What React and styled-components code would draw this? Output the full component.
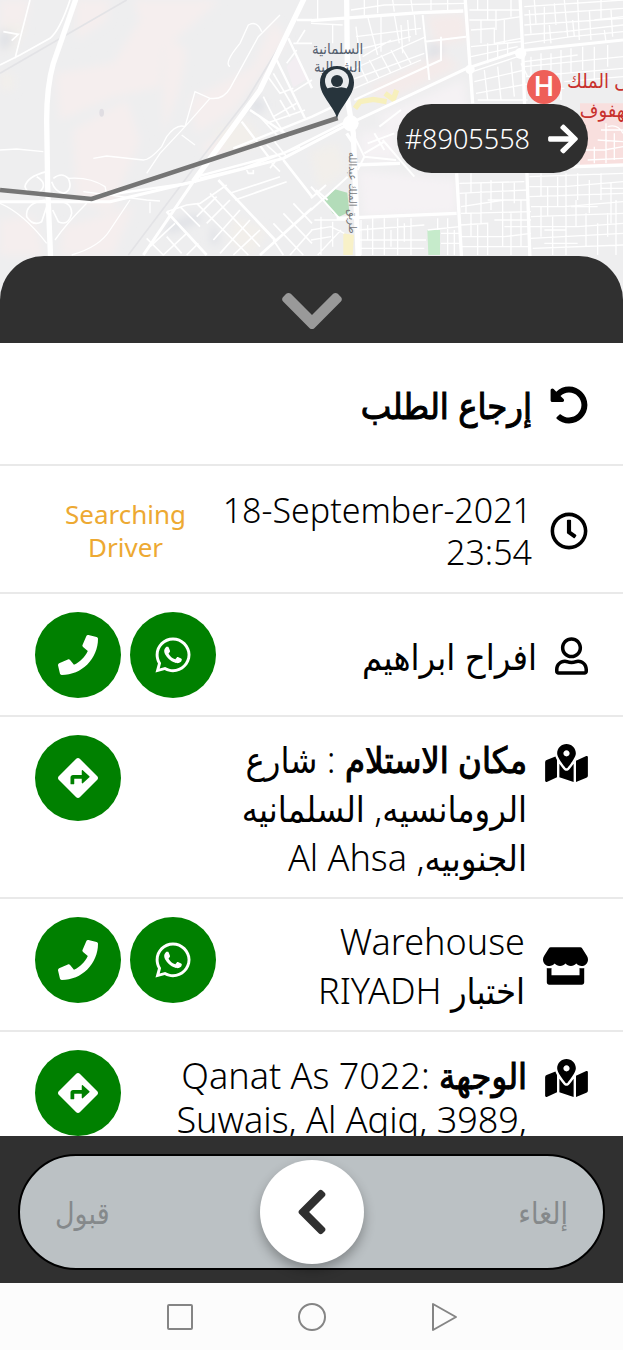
import React from "react";
import styled, { createGlobalStyle } from "styled-components";
import {
  FaArrowRight,
  FaChevronDown,
  FaChevronLeft,
  FaDirections,
  FaMapMarkedAlt,
  FaPhone,
  FaRegClock,
  FaRegUser,
  FaStore,
  FaUndoAlt,
  FaWhatsapp
} from "react-icons/fa";

const LocalStreets = () => (
  <g fill="none" stroke="#fff" strokeWidth="5">
    {/* west side tracks */}
    <path d="M90 0L45 175M210 0Q180 90 150 115L60 165L0 195M10 95L55 103L35 122" />
    <path strokeWidth="4" d="M840 45L775 110L690 265Q670 300 630 295L555 380L480 460L440 520M630 295L585 275L555 380M690 200Q670 190 720 130L745 75Q770 60 785 95M555 380Q530 370 500 410L485 440Q450 480 430 480L320 468L280 475M545 405L585 435M0 450L50 447L130 455" />
    <path strokeWidth="4" d="M205 535Q270 530 315 560L320 580M250 575L440 600L480 603M450 605V640M390 600L330 690Q300 740 215 765M0 610Q70 640 140 730M165 720Q200 670 260 610" />
    <path d="M140 515Q80 530 75 560Q85 590 120 575Q145 550 110 530M160 535Q185 515 205 535Q220 570 190 580Q165 575 155 545M135 600Q75 610 80 650Q100 680 125 665L140 620M160 605Q215 600 215 640Q205 680 175 665L158 630" />
    {/* blocks north of the route */}
    <path strokeWidth="7" d="M830 180L915 355M750 330L870 410M725 365L805 470M890 60H936M865 115L936 265" />
    <path d="M880 130H936M890 150L860 190M915 90L890 130M800 225L840 280L880 265M820 220L885 330M790 290L820 350L890 310M820 350L850 395M800 370L915 330M840 300L870 350M880 275L936 240M775 345L835 410M800 435L850 480M820 420L860 470" />
    {/* blocks south of the route */}
    <path strokeWidth="8" d="M655 540L825 720M500 635L620 765M850 480L936 590M936 625L780 765" />
    <path d="M500 635L560 615L600 610L680 555M690 580L840 530M705 600L860 545M590 610L745 765M630 580L780 740M540 620L600 680M690 600L620 670M720 630L640 720M750 660L660 760M780 690L700 765M650 590L590 650M525 670L450 740M560 700L490 765M440 715L490 765M500 710L545 760M595 730L560 765M850 640L936 730M820 670L910 765M880 610L936 670M870 765L936 690M820 720L850 765M740 510L745 520H760V510M815 490L840 515M825 485L810 505" />
  </g>
);

const CityBlocks = () => (
  <g fill="none" stroke="#fff" strokeWidth="4">
    {/* north west quarter */}
    <path d="M0 70L95 75M65 75V130M20 0V60M135 80L150 200M170 50L200 165M135 110L330 85M210 50V155M250 45L265 130M310 45L315 105M135 150L300 110M120 210L345 110M120 240L340 160M155 170L240 120M160 0V45M200 0V40M245 0L250 35M300 0L305 35M360 0V30M410 0V30M120 30L220 15L460 10M270 75L275 160M290 60L295 125" />
    <path strokeWidth="6" d="M335 45L355 240M390 110V180L130 300M465 110L340 125" />
    <path d="M145 195L170 245M175 180L205 235M210 165L240 220M240 150L270 205M270 140L300 190M130 265L330 180" />
    {/* north centre */}
    <path d="M475 30H630M475 60H560L630 50M480 90L550 85V130L630 115M480 140L630 125M480 170L620 140M500 0V30M530 0V60M555 30V90M580 60V130M600 0V50M510 60V130M530 130V190M560 135V175M590 130V165M485 215L620 170M490 245L640 210M495 280L660 250M520 210L530 300M560 200L570 300M600 185L610 290M500 300H650M630 190L650 230" />
    {/* north east */}
    <path d="M640 20L936 0M640 45L936 25M640 75L936 55M640 105L760 95L936 75M640 130L780 110L936 95M670 0L675 70M700 20V130M730 10L735 75M760 0L770 110M800 0L805 120M835 30L840 120M870 0V55M900 30L905 110M655 30L660 100M715 75L720 130M785 60L790 110M850 60L936 50M880 90L885 125M640 200L936 170M645 230L936 205M650 265H760M660 170V290M690 160V230M720 160V210M750 150V300M780 145V220M815 140V210M850 140V240M890 135V200M760 245L936 230M640 185L800 165" />
    {/* quarter behind the order pill */}
    <path strokeWidth="6" d="M130 410L160 470L140 510M160 470L255 480M215 420L310 530M205 380L270 330M160 460L220 425M170 430L250 400M130 495L255 490M190 400L220 450" />
    {/* south centre */}
    <path d="M445 550L640 545M445 580L540 575L650 570M450 620L580 600L655 600M450 640L660 635M450 675L530 670V765M450 710H580L660 700M450 740H660M480 520V580M510 550V670M540 540V630M575 545V740M610 545V610M630 600V740M480 640V710M500 675V765M550 660H660M600 640V765M465 580V640M530 600H610M580 680H660" />
    {/* south east */}
    <path d="M655 530L936 520M655 560H760L936 545M655 590L936 580M660 620H760L936 605M660 650L936 640M660 680H800L936 670M660 715L936 700M665 745L936 735M690 520V590M710 560V650M740 530V620M765 520V765M800 520V600M835 540V640M870 520V600M900 550V670M690 620V710M725 650V765M795 600V680M825 640V740M860 670V765M890 640V710M915 600V765M700 690H765M780 620H860M870 565H936M700 730H800" />
    {/* hospital campus */}
    <path d="M870 390H936M860 420L936 425M820 450H880L936 440M830 480L936 475M885 370V490M910 400V480M850 440V490M890 380Q920 370 936 400" />
    {/* south west */}
    <path d="M10 660L110 660M0 690L60 680L100 700M30 650V765M65 665V740M0 720L60 710M20 765L90 690M150 660V765M185 655V765M220 655V765M260 655V765M300 655V765M140 690L340 675M140 720H345M150 745H340M170 675V720M240 690V740M280 670V725M380 655V690M410 655V765M350 690L445 680M390 700H445M390 730H445M430 690V765" />
    <path strokeWidth="6" d="M0 560L85 655M0 630L110 530M50 600L15 570M0 595L45 555" />
  </g>
);

const MapArt = () => (
  <MapSvg viewBox="0 0 1869 1020" preserveAspectRatio="xMidYMin slice" aria-hidden="true">
    <defs>
      <filter id="soft" x="-20%" y="-20%" width="140%" height="140%">
        <feGaussianBlur stdDeviation="12" />
      </filter>
    </defs>
    <rect width="1869" height="1020" fill="#eeeeef" />
    <g filter="url(#soft)">
      <path fill="#f5eeee" d="M400 0L660 0L580 70L510 130L440 110ZM230 0H330L320 60L230 120ZM170 220L340 190L420 60L490 90L480 260L340 290L180 360ZM220 390L380 300L420 420L330 640L230 600ZM490 100L560 150L540 260L490 400ZM0 0H90L60 120L0 160ZM570 300L760 200L820 60L860 120L700 330L590 400ZM0 660L100 650L130 765H0ZM190 680L400 620L340 765H180ZM600 440L700 380L760 430L640 470Z" />
      <path fill="#f2efeb" d="M20 60L80 80L40 150L0 150ZM640 390L740 360L790 430L680 460ZM0 220H40V270H0ZM930 460L1010 430L1040 510L960 570ZM700 650L800 690L760 765L690 730Z" />
      <path fill="#dfe1e6" d="M0 90L40 100L30 140L0 150ZM755 290L800 310L780 340L750 330ZM490 680L590 640L610 660L510 700ZM640 660L660 730L630 730ZM1290 130L1340 110L1320 180L1280 180Z" />
      <path fill="#f5f2f4" d="M1075 510L1370 540L1370 640L1090 650ZM1080 400L1190 380V480H1080ZM1130 350L1390 240L1400 320L1180 390Z" />
      <path fill="#f4ebea" d="M1280 50L1390 40L1400 120L1310 140ZM1110 260L1330 160L1380 200L1140 310Z" />
    </g>
    <ellipse cx="305" cy="338" rx="7" ry="12" fill="#e0dde2" />
    <path fill="#f3eef2" d="M860 200L890 165L925 235L880 262Z" />
    <path fill="#f8dfde" d="M1740 310H1869V500H1740Z" />
    <path fill="#b3dcb9" d="M973 600L1005 568L1042 578L1048 635L1018 650L998 640Z" />
    <path fill="#c6ebcb" d="M1282 690H1320V765H1285Z" />
    <path fill="#f8f1c8" d="M1030 700L1062 705L1058 765H1030Z" />
    <path fill="none" stroke="#f7f0bd" strokeWidth="16" d="M1065 325L1080 305L1120 298L1160 305M1155 280L1180 298L1190 270" />
    <LocalStreets />
    <g transform="translate(933 0)">
      <CityBlocks />
    </g>
    <path fill="none" stroke="#e3e3e6" strokeWidth="5" d="M0 220L380 0M880 70L740 300L600 480L385 765" />
    <g fill="none" stroke="#fff" strokeLinejoin="round">
      <path strokeWidth="16" d="M230 -10L160 190Q140 260 140 360L143 560L152 780" />
      <path strokeWidth="16" d="M915 -10L780 270L580 545" />
      <path strokeWidth="9" d="M580 545L430 765M0 605H330L580 545L850 475L1040 375L1400 205L1560 152L1869 120" />
      <path strokeWidth="7" d="M320 585L560 550M590 530L850 460L1040 365M600 535L730 505L900 440M700 445L936 350L1020 310" />
      <path strokeWidth="16" d="M1040 -10L1043 300L1060 400L1075 780" />
      <path strokeWidth="10" d="M933 62L1260 38L1390 33M1395 -10L1410 200L1418 310M1560 -10L1568 150L1590 780M1370 520L1385 780M1010 655L1370 640M1570 505L1869 495M1060 495L1200 490M1060 430L1040 400" />
    </g>
    <g fill="#fff">
      <circle cx="1562" cy="160" r="17" />
      <circle cx="1410" cy="208" r="14" />
      <circle cx="1052" cy="370" r="24" />
    </g>
    <path fill="none" stroke="#757575" strokeWidth="14" d="M0 570L275 597L1013 354" />
  </MapSvg>
);

const PersonPin = () => (
  <svg viewBox="0 0 34 52" width="34" height="52" aria-hidden="true">
    <path
      fill="#27343c"
      d="M17 0C7 0 0 7 0 16.500C0 24 3.500 29 8 36C12 42 15 46 17 52C19 46 22 42 26 36C30.500 29 34 24 34 16.500C34 7 27 0 17 0Z"
    />
    <circle cx="17" cy="15" r="12" fill="#e9ebed" />
    <circle cx="17" cy="15" r="6" fill="#27343c" />
    <path fill="#27343c" d="M5 24Q10 20 17 22Q24 20 29 24L24 31H10Z" />
  </svg>
);

const ContactActions = () => (
  <Actions>
    <RoundButton type="button" aria-label="WhatsApp">
      <FaWhatsapp />
    </RoundButton>
    <RoundButton type="button" aria-label="Phone">
      <FaPhone />
    </RoundButton>
  </Actions>
);

const DirectionsAction = () => (
  <Actions>
    <RoundButton type="button" aria-label="Directions">
      <FaDirections />
    </RoundButton>
  </Actions>
);

const App = () => {
  return (
    <>
      <GlobalStyle />
      <Screen dir="rtl" lang="ar">
        <MapArea>
          <MapArt />
          <DistrictLabel>
            السلمانية
            <br />
            الشمالية
          </DistrictLabel>
          <StreetLabel>طريق الملك عبدالله</StreetLabel>
          <HospitalMark>H</HospitalMark>
          <HospitalLabel>
            مستشفى الملك
            <br />
            فهد بالهفوف
          </HospitalLabel>
          <PinSpot>
            <PersonPin />
          </PinSpot>
          <OrderPill type="button">
            <FaArrowRight />
            <span dir="ltr">#8905558</span>
          </OrderPill>
        </MapArea>

        <SheetHandle type="button" aria-label="إغلاق">
          <FaChevronDown />
        </SheetHandle>

        <Details>
          <Row $icon={38}>
            <FaUndoAlt />
            <RowText>
              <strong>إرجاع الطلب</strong>
            </RowText>
          </Row>
          <Row $icon={38} $tall>
            <FaRegClock />
            <DateText dir="ltr">
              18-September-2021
              <br />
              23:54
            </DateText>
            <Status dir="ltr">
              Searching
              <br />
              Driver
            </Status>
          </Row>
          <Row $icon={33}>
            <FaRegUser />
            <RowText>افراح ابراهيم</RowText>
            <ContactActions />
          </Row>
          <Row $icon={43} $top>
            <FaMapMarkedAlt />
            <RowText>
              <strong>مكان الاستلام</strong> : شارع
              <br />
              الرومانسيه, السلمانيه
              <br />
              الجنوبيه, Al Ahsa
            </RowText>
            <DirectionsAction />
          </Row>
          <Row $icon={45}>
            <FaStore />
            <RowText>
              Warehouse
              <br />
              اختبار RIYADH
            </RowText>
            <ContactActions />
          </Row>
          <Row $icon={43} $top>
            <FaMapMarkedAlt />
            <RowText $latin>
              <strong>الوجهة</strong> :7022 Qanat As
              <br />
              <bdi dir="ltr">Suwais, Al Aqiq, 3989,</bdi>
            </RowText>
            <DirectionsAction />
          </Row>
        </Details>

        <Footer>
          <Slide dir="ltr">
            <SlideLabels dir="rtl">
              <span>إلغاء</span>
              <span>قبول</span>
            </SlideLabels>
            <SlideInput type="range" min="0" max="100" defaultValue="50" aria-label="قبول / إلغاء" />
            <FaChevronLeft />
          </Slide>
        </Footer>

        <SystemNav dir="ltr">
          <NavButton type="button" aria-label="Recent">
            <svg viewBox="0 0 30 30">
              <rect x="3" y="3" width="24" height="24" rx="1" />
            </svg>
          </NavButton>
          <NavButton type="button" aria-label="Home">
            <svg viewBox="0 0 30 30">
              <circle cx="15" cy="15" r="13" />
            </svg>
          </NavButton>
          <NavButton type="button" aria-label="Back">
            <svg viewBox="0 0 30 30">
              <path d="M4 2V28L27 15Z" />
            </svg>
          </NavButton>
        </SystemNav>
      </Screen>
    </>
  );
};

const GlobalStyle = createGlobalStyle`
  * {
    box-sizing: border-box;
  }
  body {
    margin: 0;
    font-family: "Noto Sans", "Open Sans", "DejaVu Sans Condensed", "DejaVu Sans", sans-serif;
    color: #000;
  }
  button {
    border: 0;
    padding: 0;
    font: inherit;
    cursor: pointer;
  }
`;

const Screen = styled.main`
  height: 100vh;
  display: flex;
  flex-direction: column;
  overflow: hidden;
  background: #fff;
`;

const MapArea = styled.section`
  position: relative;
  flex: 0 0 300px;
  overflow: hidden;
  background: #eeeeef;
`;

const MapSvg = styled.svg`
  display: block;
  width: 100%;
  height: 340px;
`;

const DistrictLabel = styled.span`
  position: absolute;
  top: 39px;
  left: 312px;
  font-size: 15px;
  line-height: 18px;
  color: #566170;
  text-align: center;
`;

const StreetLabel = styled.span`
  position: absolute;
  top: 152px;
  left: 346px;
  writing-mode: vertical-rl;
  font-size: 11px;
  line-height: 14px;
  color: #77797c;
  white-space: nowrap;
`;

const HospitalMark = styled.span`
  position: absolute;
  top: 70px;
  left: 527px;
  width: 34px;
  height: 34px;
  border-radius: 50%;
  background: #ee5f58;
  color: #fff;
  font-family: Roboto, sans-serif;
  font-size: 28px;
  font-weight: 500;
  line-height: 34px;
  text-align: center;
`;

const HospitalLabel = styled.span`
  position: absolute;
  top: 66px;
  left: 567px;
  font-size: 20px;
  line-height: 29px;
  color: #c8312d;
  text-align: center;
  white-space: nowrap;
`;

const PinSpot = styled.span`
  position: absolute;
  top: 66px;
  left: 320px;
  line-height: 0;
`;

const OrderPill = styled.button`
  position: absolute;
  top: 104px;
  right: 35px;
  height: 69px;
  padding: 0 8px;
  display: flex;
  align-items: center;
  gap: 16px;
  border-radius: 35px;
  background: #2f2f2f;
  color: #fff;
  font-size: 27px;
  font-weight: 300;
  svg {
    font-size: 34px;
  }
`;

const SheetHandle = styled.button`
  position: relative;
  flex: 0 0 87px;
  min-height: 0;
  margin-top: -44px;
  padding-top: 22px;
  display: flex;
  justify-content: center;
  align-items: center;
  border-radius: 44px 44px 0 0;
  background: #303030;
  color: #999;
  svg {
    width: 62px;
    height: 70px;
  }
`;

const Details = styled.section`
  flex: 1 1 0;
  min-height: 0;
  overflow: hidden;
`;

const Row = styled.div`
  display: flex;
  align-items: ${props => (props.$top ? "flex-start" : "center")};
  gap: 18px;
  min-height: ${props => (props.$tall ? "128px" : "123px")};
  padding: 18px 35px 15px;
  border-bottom: 2px solid #e9e9e9;
  > svg {
    flex: none;
    width: ${props => props.$icon}px;
    height: 38px;
    margin-top: ${props => (props.$top ? "9px" : "0")};
  }
`;

const RowText = styled.p`
  flex: 1;
  margin: 0;
  padding-top: ${props => (props.$latin ? "4px" : "0")};
  font-size: 36px;
  font-weight: 300;
  line-height: ${props => (props.$latin ? "44px" : "49px")};
  white-space: nowrap;
  strong {
    font-weight: 400;
    -webkit-text-stroke: 1px #000;
  }
`;

const DateText = styled.p`
  flex: 1;
  margin: 0;
  font-size: 34px;
  font-weight: 300;
  line-height: 42px;
  text-align: right;
  white-space: nowrap;
`;

const Status = styled.p`
  margin: 0;
  padding-left: 30px;
  padding-right: 12px;
  font-size: 26px;
  line-height: 33px;
  color: #eda932;
  text-align: center;
`;

const Actions = styled.div`
  display: flex;
  align-self: flex-start;
  gap: 9px;
`;

const RoundButton = styled.button`
  width: 86px;
  height: 86px;
  display: flex;
  justify-content: center;
  align-items: center;
  border-radius: 50%;
  background: #008000;
  color: #fff;
  font-size: 40px;
`;

const Footer = styled.footer`
  flex: 0 0 147px;
  padding: 18px 18px 13px;
  background: #303030;
`;

const Slide = styled.div`
  display: grid;
  height: 116px;
  border: 2px solid #000;
  border-radius: 58px;
  background: #bbc1c4;
  color: #303030;
  > * {
    grid-area: 1 / 1;
  }
  > svg {
    z-index: 1;
    width: 52px;
    height: 52px;
    place-self: center;
    pointer-events: none;
  }
`;

const SlideLabels = styled.div`
  display: flex;
  justify-content: space-between;
  align-items: center;
  padding: 0 35px;
  font-size: 30px;
  color: #85898b;
`;

const SlideInput = styled.input`
  appearance: none;
  width: 100%;
  height: 104px;
  margin: 0;
  align-self: center;
  background: transparent;
  &::-webkit-slider-thumb {
    appearance: none;
    width: 104px;
    height: 104px;
    border-radius: 50%;
    background: #fff;
    box-shadow: 0 6px 12px rgba(0, 0, 0, 0.3);
  }
`;

const SystemNav = styled.nav`
  flex: 0 0 67px;
  display: flex;
  justify-content: center;
  align-items: center;
  gap: 102px;
  background: #fcfcfc;
`;

const NavButton = styled.button`
  width: 30px;
  height: 30px;
  background: none;
  svg {
    display: block;
    fill: none;
    stroke: #858585;
    stroke-width: 2;
    stroke-linejoin: round;
  }
`;

export default App;
